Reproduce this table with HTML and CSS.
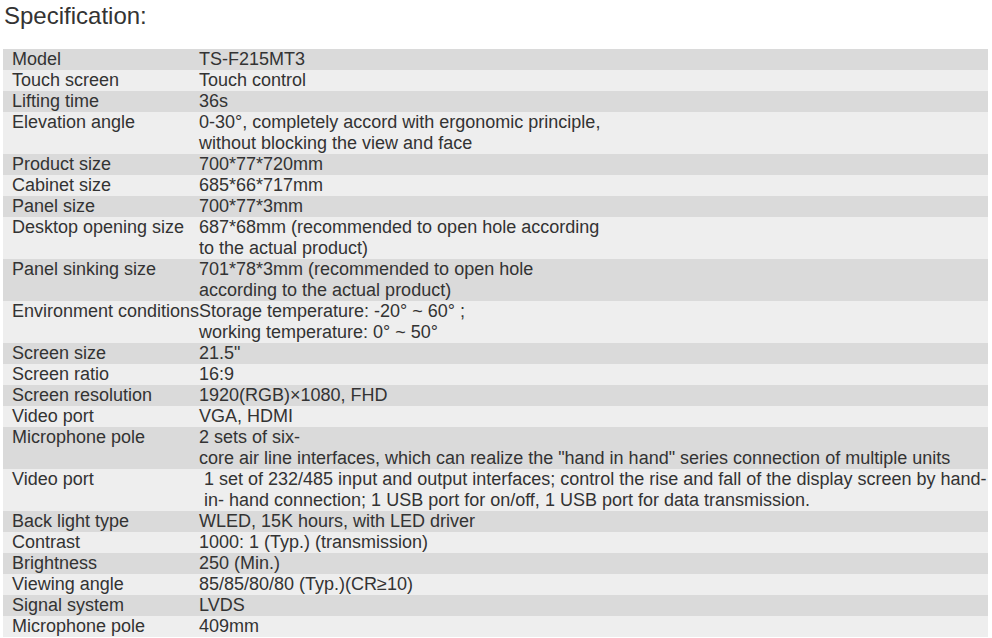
FILE: index.html
```html
<!DOCTYPE html>
<html>
<head>
<meta charset="utf-8">
<link rel="stylesheet" href="styles.css">
</head>
<body>
<div class="page">
  <h2 class="title">Specification:</h2>
  <div class="spec">
    <div class="row"><div class="k">Model</div><div class="v">TS-F215MT3</div></div>
    <div class="row"><div class="k">Touch screen</div><div class="v">Touch control</div></div>
    <div class="row"><div class="k">Lifting time</div><div class="v">36s</div></div>
    <div class="row"><div class="k">Elevation angle</div><div class="v">0-30°, completely accord with ergonomic principle,<br>without blocking the view and face</div></div>
    <div class="row"><div class="k">Product size</div><div class="v">700*77*720mm</div></div>
    <div class="row"><div class="k">Cabinet size</div><div class="v">685*66*717mm</div></div>
    <div class="row"><div class="k">Panel size</div><div class="v">700*77*3mm</div></div>
    <div class="row"><div class="k">Desktop opening size</div><div class="v">687*68mm (recommended to open hole according<br>to the actual product)</div></div>
    <div class="row"><div class="k">Panel sinking size</div><div class="v">701*78*3mm (recommended to open hole<br>according to the actual product)</div></div>
    <div class="row"><div class="k">Environment conditions</div><div class="v">Storage temperature: -20° ~ 60° ;<br>working temperature: 0° ~ 50°</div></div>
    <div class="row"><div class="k">Screen size</div><div class="v">21.5"</div></div>
    <div class="row"><div class="k">Screen ratio</div><div class="v">16:9</div></div>
    <div class="row"><div class="k">Screen resolution</div><div class="v">1920(RGB)×1080, FHD</div></div>
    <div class="row"><div class="k">Video port</div><div class="v">VGA, HDMI</div></div>
    <div class="row"><div class="k">Microphone pole</div><div class="v">2 sets of six-<br>core air line interfaces, which can realize the "hand in hand" series connection of multiple units</div></div>
    <div class="row"><div class="k">Video port</div><div class="v">&nbsp;1 set of 232/485 input and output interfaces; control the rise and fall of the display screen by hand-<br>&nbsp;in- hand connection; 1 USB port for on/off, 1 USB port for data transmission.</div></div>
    <div class="row"><div class="k">Back light type</div><div class="v">WLED, 15K hours, with LED driver</div></div>
    <div class="row"><div class="k">Contrast</div><div class="v">1000: 1 (Typ.) (transmission)</div></div>
    <div class="row"><div class="k">Brightness</div><div class="v">250 (Min.)</div></div>
    <div class="row"><div class="k">Viewing angle</div><div class="v">85/85/80/80 (Typ.)(CR≥10)</div></div>
    <div class="row"><div class="k">Signal system</div><div class="v">LVDS</div></div>
    <div class="row"><div class="k">Microphone pole</div><div class="v">409mm</div></div>
  </div>
</div>
</body>
</html>
```

FILE: styles.css
```css
html, body {
  margin: 0;
  padding: 0;
  background: #ffffff;
}

.page {
  padding: 0 0 0 3px;
  width: 985px;
  font-family: "Liberation Sans", Arial, sans-serif;
  color: #333333;
}

.title {
  margin: 0;
  padding: 1px 0 0 1px;
  font-size: 24px;
  font-weight: normal;
  line-height: 30px;
  height: 48px;
}

.spec {
  display: flex;
  flex-direction: column;
  font-size: 18px;
  line-height: 21px;
}

.row {
  display: grid;
  grid-template-columns: 196px minmax(0, 1fr);
  background: #eeeeee;
}

.row:nth-child(odd) {
  background: #dadada;
}

.k {
  padding-left: 9px;
  white-space: nowrap;
}

.v {
  padding: 0;
  white-space: nowrap;
}
```
